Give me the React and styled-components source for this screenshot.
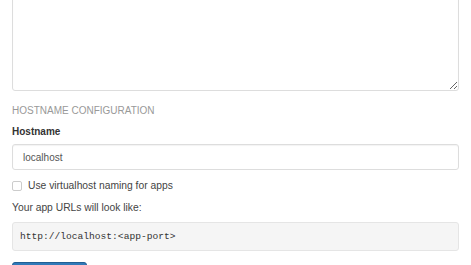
import React from "react";
import styled, { createGlobalStyle } from "styled-components";

const GlobalStyle = createGlobalStyle`
  html, body {
    margin: 0;
    padding: 0;
    background: #fff;
    overflow: hidden;
  }
  body {
    font-family: "Liberation Sans", Arial, sans-serif;
    color: #333;
  }
`;

const Page = styled.div`
  margin-top: -30px;
  padding: 0 12px;
  display: flex;
  flex-direction: column;
`;

const TextArea = styled.textarea`
  display: block;
  box-sizing: border-box;
  width: 100%;
  height: 121px;
  border: 1px solid #ddd;
  border-radius: 3px;
  box-shadow: inset 0 1px 1px rgba(0, 0, 0, 0.05);
  resize: vertical;
  font-family: inherit;
  margin: 0;
`;

const SectionTitle = styled.h3`
  margin: 13px 0 0;
  font-size: 10px;
  font-weight: 400;
  color: #999;
  text-transform: uppercase;
  line-height: 14px;
`;

const Label = styled.label`
  display: block;
  margin-top: 7px;
  font-size: 10px;
  font-weight: 700;
  color: #333;
  line-height: 14px;
`;

const Input = styled.input`
  display: block;
  box-sizing: border-box;
  width: 100%;
  height: 26px;
  margin-top: 5px;
  padding: 0 10px;
  border: 1px solid #ddd;
  border-radius: 3px;
  box-shadow: inset 0 1px 1px rgba(0, 0, 0, 0.05);
  font-family: inherit;
  font-size: 10px;
  color: #555;
  outline: none;
`;

const CheckRow = styled.label`
  display: flex;
  align-items: center;
  gap: 6px;
  margin-top: 9px;
  font-size: 10.3px;
  color: #444;
  line-height: 14px;
`;

const Box = styled.span`
  width: 8px;
  height: 8px;
  border: 1px solid #ccc;
  border-radius: 2px;
  background: #fff;
`;

const Note = styled.p`
  margin: 8px 0 0;
  font-size: 10.3px;
  color: #444;
  line-height: 14px;
`;

const Code = styled.div`
  box-sizing: border-box;
  margin-top: 7px;
  height: 29px;
  padding: 0 7px;
  display: flex;
  align-items: center;
  background: #f5f5f5;
  border: 1px solid #e5e5e5;
  border-radius: 3px;
  font-family: "Liberation Mono", "Courier New", monospace;
  font-size: 9.6px;
  color: #333;
`;

const Button = styled.button`
  margin-top: 11px;
  width: 75px;
  height: 26px;
  border: 1px solid #215f94;
  border-radius: 3px;
  background: #3079b8;
  color: #fff;
  font-family: inherit;
  font-size: 10px;
  align-self: flex-start;
`;

export default function App() {
  return (
    <>
      <GlobalStyle />
      <Page>
        <TextArea />
        <SectionTitle>Hostname configuration</SectionTitle>
        <Label htmlFor="hostname">Hostname</Label>
        <Input id="hostname" defaultValue="localhost" />
        <CheckRow>
          <Box />
          Use virtualhost naming for apps
        </CheckRow>
        <Note>Your app URLs will look like:</Note>
        <Code>http://localhost:&lt;app-port&gt;</Code>
        <Button>Save</Button>
      </Page>
    </>
  );
}
